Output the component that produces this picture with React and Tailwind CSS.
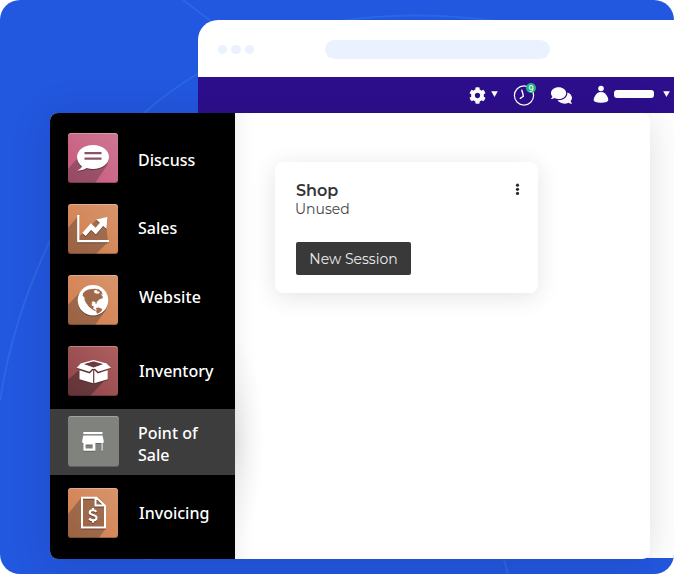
import { FaCog, FaComments } from "react-icons/fa";

const ICON_SHADOW = "drop-shadow-[0_1px_0_rgba(60,30,20,0.55)]";

function DiscussIcon() {
  return (
    <svg viewBox="0 0 50 50" className="size-full">
      <path d="M13 21 0 36v14h27l13-19z" fill="#302c30" fillOpacity=".32" />
      <g className={ICON_SHADOW}>
        <path
          fill="#fff"
          d="M25 12c-9 0-16 5.400-16 12.100 0 4 2 7 5 9.300-.7 1.700-2.400 3-4.900 4 3.800.3 7.200-.8 9.600-2.300 2 .6 4.200.9 6.300.9 9 0 16-5.300 16-12S34 12 25 12z"
        />
        <path d="M16.500 20.200h17M16.500 25.700h17" stroke="#8a5468" strokeWidth="2.200" />
      </g>
    </svg>
  );
}

function SalesIcon() {
  return (
    <svg viewBox="0 0 50 50" className="size-full">
      <path d="M10 12 0 24v26h28l12-12-2-18-3-6-7 2-12 13-6 4z" fill="#302c30" fillOpacity=".32" />
      <g className={ICON_SHADOW}>
        <path d="M10.300 11v26.200H41" fill="none" stroke="#fff" strokeWidth="2.300" />
        <path
          d="M16 30.500l7-8 4.700 4.700 7-8.200"
          fill="none"
          stroke="#fff"
          strokeWidth="4.600"
        />
        <path d="M28.200 15.600 39.400 13 38.500 25z" fill="#fff" />
      </g>
    </svg>
  );
}

function WebsiteIcon() {
  return (
    <svg viewBox="0 0 50 50" className="size-full">
      <path d="M13 16 0 30v20h27l11-15z" fill="#302c30" fillOpacity=".32" />
      <g className={ICON_SHADOW}>
        <circle cx="25" cy="25.300" r="15.300" fill="#fff" />
        <path
          fill="#a0694a"
          d="M15 18.300c2.500-3 5.500-4.300 9-4.300l3-.3 4 .8 2.700 2.300 1 2.700-2.200-.3 2 1.800.3 2.300-3.300 1-2.500 2.500-.8 2.500-2.700-1.300-2 .8.500 2.300 1.700 0-.5 2.700 2.500 1.200-.2 1.200-3.500-2-3.300-2.700-2.400-3.200-1.600-2.800-.3-3.200-1.800-1.300z"
        />
        <path fill="#fff" d="m25.800 15.700 2.600-.9 1 1.500 2.700.7-1.700 1.800-2.200-.3-1.500-.5zM23.500 27l2-.7 2.200 1.200-.3 2.500-2.200-.4z" />
        <path
          fill="#a0694a"
          d="m27.800 33 2.900-.4 3.600 1.500-.8 1.900-2.500 2-2 .8-.9-2.700.6-1.300z"
        />
      </g>
    </svg>
  );
}

function InventoryIcon() {
  return (
    <svg viewBox="0 0 50 50" className="size-full">
      <path d="M11 24 0 34v16h22l17-18-14-16z" fill="#1c1c20" fillOpacity=".38" />
      <g className={ICON_SHADOW}>
        <path
          d="M25.500 14.700 37.500 18l-12 4.500-12-4.500z"
          fill="#6a3b3e"
          stroke="#fff"
          strokeWidth="1.300"
          strokeLinejoin="round"
        />
        <path
          fill="#fff"
          d="M13 17.300 25.600 21.400 21.300 25.800 8.700 21.800zM38.200 17.300 25.600 21.400 30.200 25.800 43 21.800z"
        />
        <path
          fill="#fff"
          d="m11.500 24.300 10.200 3.300 3.400-3.700v13.300l-13.600-3.900zM39.700 24.300 29.700 27.600l-3.400-3.700v13.300l13.400-3.900z"
        />
      </g>
    </svg>
  );
}

function PosIcon() {
  return (
    <svg viewBox="0 0 51 51" className="size-full">
      <g className="drop-shadow-[0_1px_0_rgba(60,60,60,0.4)]">
        <path
          fill="#fff"
          fillRule="evenodd"
          d="M15.300 16h19.200v2.200H15.300zM15.300 19.600h19.200l1.200 5v2.400h-1.100v7.800h-1v-7.800h-6.200v7.800H15.400v-7.800h-1.200v-2.400zM17.600 28.400v4h7v-4z"
        />
      </g>
    </svg>
  );
}

function InvoicingIcon() {
  return (
    <svg viewBox="0 0 50 50" className="size-full">
      <path d="M13 10 0 26v24h31l7-10V17l-8-8z" fill="#302c30" fillOpacity=".32" />
      <g className={ICON_SHADOW} fill="none" stroke="#fff">
        <path d="M14 9.700h14.500l8.500 8v21.700H14zM27.500 9.700v7.800H37" strokeWidth="2" />
        <path
          d="M28.300 23.800c-.8-1.100-2-1.500-3.400-1.500-1.900 0-3.200.9-3.200 2.300 0 3.300 6.900 1.600 6.900 5.100 0 1.600-1.500 2.600-3.500 2.600-1.700 0-3-.6-3.900-1.800M25 20v2.400M25 32.200v2.500"
          strokeWidth="2.100"
        />
      </g>
    </svg>
  );
}

const TILE_ORANGE = "size-[50px] bg-linear-to-bl from-[#d8946c] to-[#d07d4b]";

const APPS = [
  {
    label: "Discuss",
    Icon: DiscussIcon,
    row: "h-[71px]",
    tile: "size-[50px] bg-linear-to-bl from-[#cc7792] to-[#ca577d]",
    text: "ml-5 mt-4",
  },
  { label: "Sales", Icon: SalesIcon, row: "h-[71px]", tile: TILE_ORANGE, text: "ml-5 mt-[13px]" },
  { label: "Website", Icon: WebsiteIcon, row: "h-[71px]", tile: TILE_ORANGE, text: "ml-[21px] mt-[11px] tracking-[0.1px]" },
  {
    label: "Inventory",
    Icon: InventoryIcon,
    row: "h-[63px]",
    tile: "size-[50px] bg-linear-to-bl from-[#ae6060] to-[#8d4347]",
    text: "ml-[21px] mt-[14px]",
  },
  {
    label: "Point of Sale",
    Icon: PosIcon,
    row: "h-[66px] bg-[#3d3d3d] pt-[7px] mb-[13px]",
    tile: "size-[51px] bg-[#80827e]",
    text: "ml-[19px] mt-[6px] w-[75px]",
  },
  { label: "Invoicing", Icon: InvoicingIcon, row: "h-[50px]", tile: TILE_ORANGE, text: "ml-[21px] mt-[14px]" },
];

function Sidebar() {
  return (
    <ul className="w-[185px] shrink-0 overflow-hidden rounded-l-[8px] bg-black pt-5">
      {APPS.map(({ label, Icon, row, tile, text }) => (
        <li key={label} className={`flex items-start pl-[18px] ${row}`}>
          <span
            className={`block shrink-0 overflow-hidden rounded-[3px] shadow-[inset_0_1px_0_rgba(255,255,255,0.28),inset_0_-1px_0_rgba(0,0,0,0.25)] ${tile}`}
          >
            <Icon />
          </span>
          <span className={`text-[16px] leading-[22px] font-medium text-white ${text}`}>{label}</span>
        </li>
      ))}
    </ul>
  );
}

function ShopCard() {
  return (
    <section className="mt-[49px] ml-10 h-[131px] w-[263px] rounded-[8px] bg-white pt-[19px] pr-[17px] pl-5 font-['Montserrat',Inter,sans-serif] shadow-[0_4px_24px_rgba(0,0,0,0.11)]">
      <div className="flex items-start justify-between">
        <div>
          <h2 className="pl-px text-[16px] leading-[19px] font-semibold text-[#353535]">Shop</h2>
          <p className="text-[14px] leading-[18px] font-normal text-[#454545]">Unused</p>
        </div>
        <svg viewBox="0 0 8 12" className="mt-[2px] h-3 w-2" fill="#2c2c2c">
          <circle cx="4.500" cy="2.200" r="1.600" />
          <circle cx="4.500" cy="6.300" r="1.600" />
          <circle cx="4.500" cy="10.400" r="1.600" />
        </svg>
      </div>
      <button className="mt-6 ml-px flex h-[33px] w-[115px] items-center justify-center rounded-[2px] bg-[#393939] pt-px text-[14px] font-normal whitespace-nowrap text-[#ececec]">
        New Session
      </button>
    </section>
  );
}

function Caret() {
  return (
    <svg viewBox="0 0 7 6" className="mb-[2px] h-[6px] w-[7px] shrink-0" fill="#fff">
      <path d="M.200.200h6.600L3.500 6z" />
    </svg>
  );
}

function BrowserWindow() {
  return (
    <div className="h-full overflow-hidden rounded-tl-[20px] bg-white">
      <div className="flex h-[57px] items-center pl-5">
        <div className="mt-[2px] flex gap-[4px]">
          <i className="size-[9.400px] rounded-full bg-[#ebf2ff]" />
          <i className="size-[9.400px] rounded-full bg-[#ebf2ff]" />
          <i className="size-[9.400px] rounded-full bg-[#ebf2ff]" />
        </div>
        <div className="mt-[2px] ml-[71px] h-[19px] w-[225px] rounded-full bg-[#ebf2ff]" />
      </div>
      <div className="flex h-9 items-center bg-[#2d0e8c] pl-[271px] text-white">
        <FaCog className="mt-px size-[17px]" />
        <div className="ml-[5px]">
          <Caret />
        </div>
        <div className="relative ml-[15px] size-[22px]">
          <svg viewBox="0 0 22 22" className="size-full" fill="none" stroke="#fff" strokeWidth="1.200">
            <circle cx="11" cy="11.500" r="9.600" />
            <path d="M8.800 6.200l.8 2.500.7 3.600-3 2" strokeLinecap="round" strokeWidth="1.400" />
          </svg>
          <span className="absolute -top-[1px] left-[13px] flex size-[10px] items-center justify-center rounded-full bg-[#20b582] text-[9px] leading-none font-medium">
            9
          </span>
        </div>
        <FaComments className="mt-px ml-4 size-[21px]" />
        <svg viewBox="0 0 16 18" className="mb-[2px] ml-[21px] h-[18px] w-4" fill="#fff">
          <circle cx="8" cy="3.500" r="2.800" />
          <path d="M8 7c3 0 4.500 1.200 6 4 1.600 3 2 5-.5 5.900-3 1.100-8 1.100-11 0C0 16 .4 14 2 11c1.500-2.800 3-4 6-4z" />
        </svg>
        <div className="mb-[2px] ml-[5px] h-2 w-10 shrink-0 rounded-[3px] bg-white" />
        <div className="ml-[9px]">
          <Caret />
        </div>
      </div>
    </div>
  );
}

export default function App() {
  return (
    <div className="h-[575px] w-[674px] bg-white font-['Noto_Sans',sans-serif]">
      <div className="relative h-[574px] overflow-hidden rounded-[20px] bg-[#2257df]">
        <svg
          viewBox="0 0 674 574"
          className="absolute inset-0 size-full"
          fill="none"
          stroke="#2b67e4"
          strokeWidth="2"
        >
          <path d="M0 401C9 343 26 291 49 243 73 194 105 149 144 113 161 98 179 85 199 73" />
          <path d="M183 0 211 21M340 21Q415 10 495 21M503 556l5 18" />
          <path d="M138 557q10 4 20 0" />
        </svg>
        <div className="relative ml-[198px] h-[558px] pt-5">
          <BrowserWindow />
        </div>
        <main className="absolute top-[113px] left-[50px] flex h-[446px] w-[600px] rounded-[8px] bg-white shadow-[0_4px_40px_rgba(0,0,0,0.13)]">
          <Sidebar />
          <div className="flex-1 rounded-r-[8px] bg-[radial-gradient(ellipse_30px_100px_at_0_325px,rgba(0,0,0,0.08),rgba(0,0,0,0.03)_50%,transparent)] shadow-[inset_24px_0_24px_-24px_rgba(0,0,0,0.09)]">
            <ShopCard />
          </div>
        </main>
      </div>
    </div>
  );
}
